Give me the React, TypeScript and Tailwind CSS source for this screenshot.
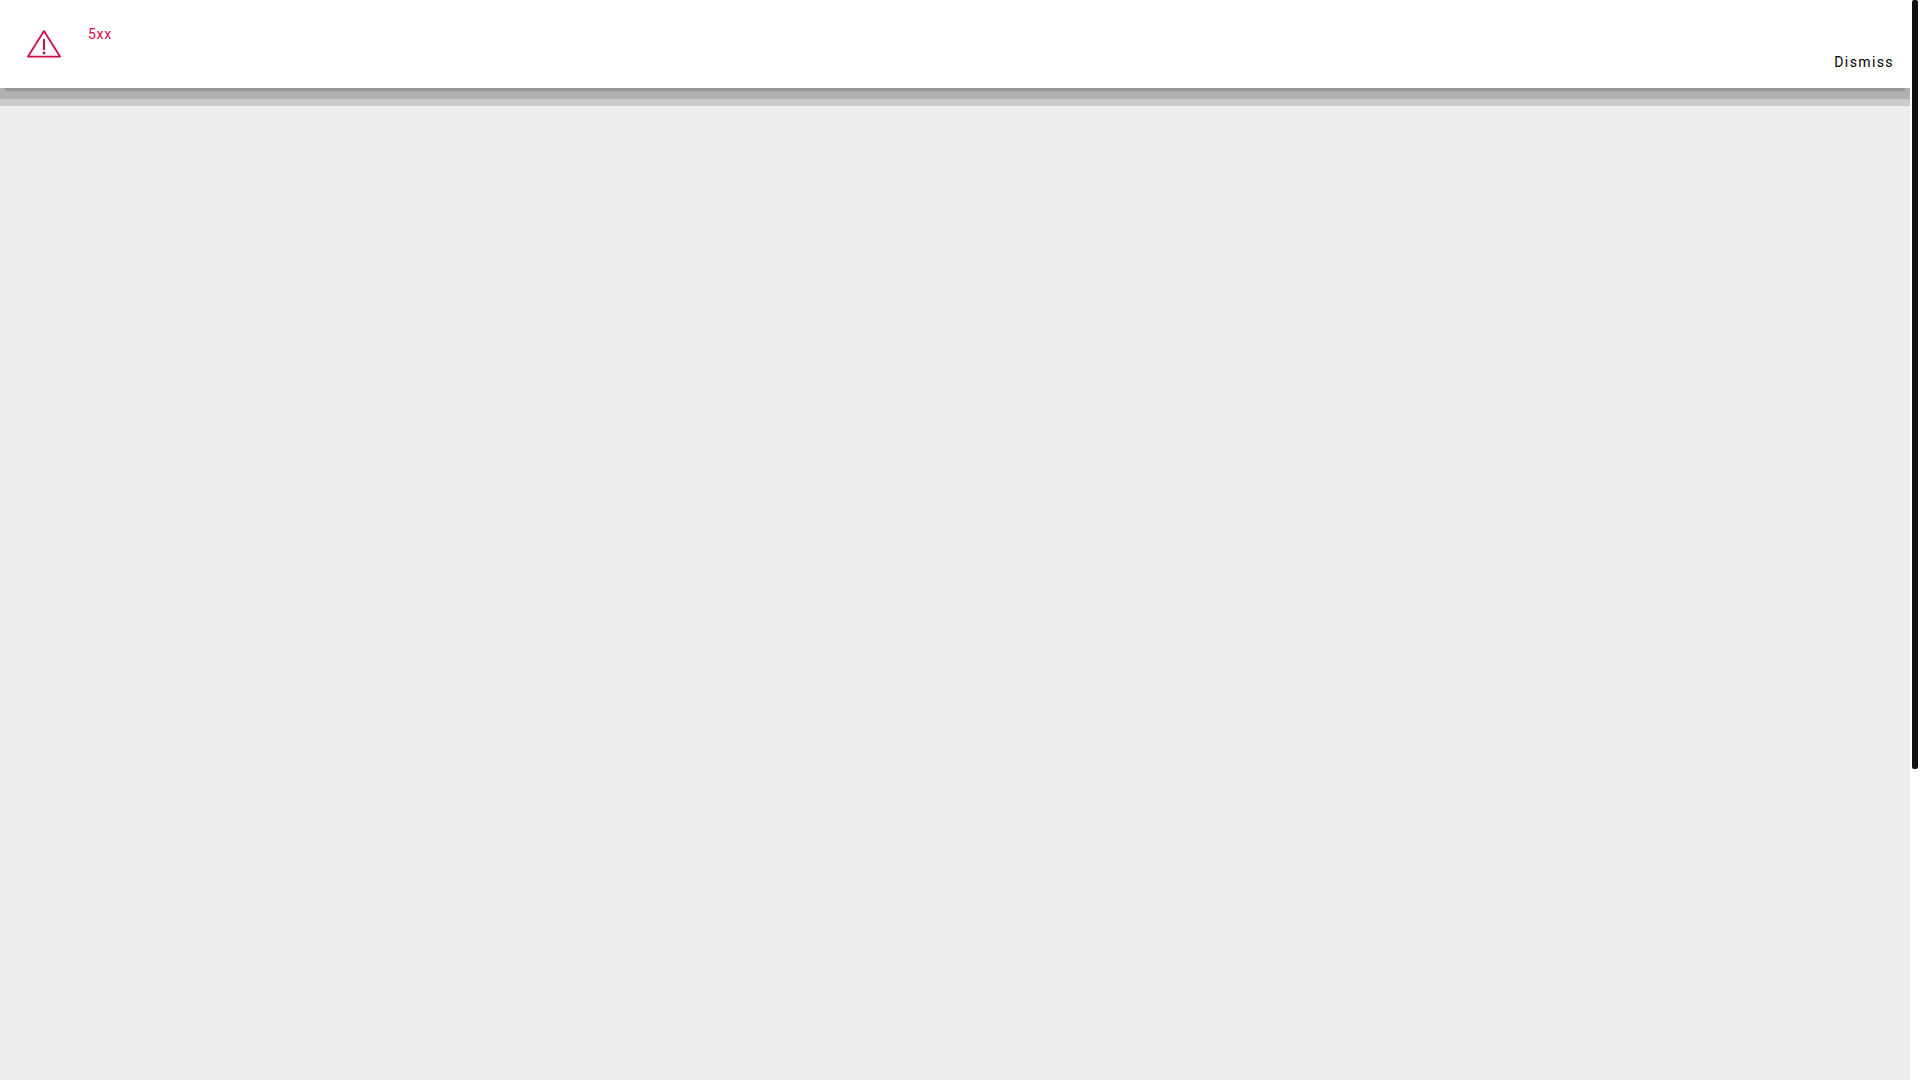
function WarningIcon() {
  return (
    <svg width="36" height="32" viewBox="0 0 36 32" fill="none" stroke="#d50b43" strokeWidth="1.8" strokeLinejoin="round" strokeLinecap="round">
      <path d="M18 4 L34 29.6 H2 Z" />
      <path d="M18 12 V23" strokeWidth="2" strokeLinecap="butt" />
      <circle cx="18" cy="26" r="1.4" fill="#d50b43" stroke="none" />
    </svg>
  );
}

export default function App() {
  return (
    <div className="flex h-screen w-full overflow-hidden bg-white font-['Roboto',sans-serif]">
      <div className="flex w-[1910px] flex-col bg-[#eeeeee]">
        {/* Error banner */}
        <div className="flex h-[88px] items-start justify-between bg-white">
          <div className="flex">
            <div className="ml-[26px] mt-[27px]">
              <WarningIcon />
            </div>
            <span className="ml-[26px] mt-[25px] text-[14px] leading-[18px] tracking-[0.7px] text-[#d50b43]">5xx</span>
          </div>
          <button className="mr-[16px] mt-[53px] text-[14px] font-normal leading-[18px] tracking-[1.4px] text-black">Dismiss</button>
        </div>
        {/* Shadow under banner */}
        <div className="h-[18px] bg-[#cacaca]">
          <div className="h-[11px] bg-[#b0b0b0] px-[5px]">
            <div className="h-[3px] bg-[#979797]" />
          </div>
        </div>
      </div>
      {/* Scrollbar */}
      <div className="w-[10px] pl-[2px] pr-[2px]">
        <div className="h-[769px] rounded-[2px] bg-[#111111]" />
      </div>
    </div>
  );
}
